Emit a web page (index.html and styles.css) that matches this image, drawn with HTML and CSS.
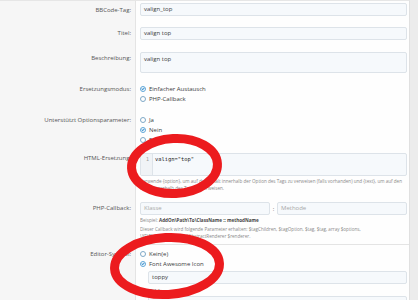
FILE: index.html
```html
<!DOCTYPE html>
<html lang="de">

<head>
    <meta charset="UTF-8">
    <meta name="viewport" content="width=device-width, initial-scale=1.0">
    <title>BB-Code bearbeiten</title>
    <link rel="stylesheet" href="styles.css">
</head>

<body>
    <div class="page">
        <div class="block">
            <!-- BBCode-Tag -->
            <div class="row row-first">
                <div class="label">BBCode-Tag:</div>
                <div class="field">
                    <div class="input">valign_top</div>
                </div>
            </div>

            <div class="row">
                <div class="label">Titel:</div>
                <div class="field">
                    <div class="input">valign top</div>
                </div>
            </div>

            <div class="row row-desc">
                <div class="label">Beschreibung:</div>
                <div class="field">
                    <div class="input textarea">valign top</div>
                </div>
            </div>

            <div class="row row-mode">
                <div class="label">Ersetzungsmodus:</div>
                <div class="field">
                    <div class="choice checked"><span class="radio"></span>Einfacher Austausch</div>
                    <div class="choice"><span class="radio"></span>PHP-Callback</div>
                </div>
            </div>

            <div class="row row-opts">
                <div class="label">Unterstützt Optionsparameter:</div>
                <div class="field">
                    <div class="choice"><span class="radio"></span>Ja</div>
                    <div class="choice checked"><span class="radio"></span>Nein</div>
                    <div class="choice"><span class="radio"></span>Erforderlich</div>
                </div>
            </div>

            <div class="row row-html">
                <div class="label">HTML-Ersetzung:</div>
                <div class="field">
                    <div class="editor">
                        <div class="gutter">1</div>
                        <div class="code">valign="top"</div>
                    </div>
                    <p class="hint">Verwende {option}, um auf den Inhalt innerhalb der Option des Tags zu verweisen (falls vorhanden) und {text}, um auf den</p>
                    <p class="hint hint-next">Inhalt innerhalb des Tags zu verweisen.</p>
                </div>
            </div>

            <div class="row row-callback">
                <div class="label">PHP-Callback:</div>
                <div class="field">
                    <div class="callback">
                        <div class="input placeholder">Klasse</div>
                        <span class="sep">:</span>
                        <div class="input placeholder">Methode</div>
                    </div>
                    <p class="hint">Beispiel: <b>AddOn\Path\To\ClassName :: methodName</b></p>
                    <p class="hint hint-params">Dieser Callback wird folgende Parameter erhalten: $tagChildren, $tagOption, $tag, $tag, array $options,</p>
                    <p class="hint hint-next">\XF\BbCode\Renderer\AbstractRenderer $renderer.</p>
                </div>
            </div>

            <div class="row row-icon">
                <div class="label">Editor-Symbol:</div>
                <div class="field">
                    <div class="choice"><span class="radio"></span>Kein(e)</div>
                    <div class="choice checked"><span class="radio"></span>Font Awesome Icon</div>
                    <div class="input sub">toppy</div>
                    <div class="choice"><span class="radio"></span>Bild</div>
                    <div class="input sub sub-last"></div>
                </div>
            </div>
        </div>
        <div class="rail"></div>
    </div>

    <!-- Markierungen -->
    <svg class="marks" width="418" height="300" viewBox="0 0 418 300">
        <ellipse cx="174.5" cy="166" rx="43" ry="27.5" fill="none" stroke="#ec1b1e" stroke-width="9" transform="rotate(-3 174.5 166)"/>
        <ellipse cx="167" cy="266" rx="52.5" ry="28.5" fill="none" stroke="#ec1b1e" stroke-width="9" transform="rotate(-3 167 266)"/>
    </svg>
</body>

</html>
```

FILE: styles.css
```css
body,
html {
    margin: 0;
    padding: 0;
    height: 100%;
    overflow: hidden;
    font-family: 'Open Sans', 'Noto Sans', sans-serif;
    background-color: #ececec;
}

.page {
    display: flex;
    height: 300px;
}

.block {
    width: 409px;
    background-color: #fefefe;
    border-top: 1px solid #e6e6e6;
    border-right: 1px solid #e0e0e0;
    overflow: hidden;
}

.rail {
    flex: 1;
    background-color: #ececec;
}

.row {
    display: flex;
}

.label {
    width: 131px;
    flex-shrink: 0;
    padding-right: 4px;
    background-color: #f6f6f6;
    border-right: 1px solid #e4e4e4;
    text-align: right;
    font-size: 6px;
    color: #555;
    line-height: 10px;
}

.field {
    flex: 1;
    min-width: 0;
    padding: 0 2px 0 4px;
    font-size: 6px;
    color: #333;
}

/* Zeilenabstände */
.row .label { padding-top: 6px; }
.row .field { padding-top: 5px; padding-bottom: 6px; }

.row-first .label { padding-top: 4px; }
.row-first .field { padding-top: 2px; }

.row-desc .label { padding-top: 7px; }
.row-desc .field { padding-top: 6px; padding-bottom: 5px; }

.row-mode .label { padding-top: 6px; }
.row-mode .field { padding-top: 6px; padding-bottom: 5px; }

.row-opts .label { padding-top: 6px; }
.row-opts .field { padding-top: 6px; padding-bottom: 4px; }

.row-html .label { padding-top: 4px; }
.row-html .field { padding-top: 4px; padding-bottom: 5px; }

.row-callback .label { padding-top: 6px; }
.row-callback .field {
    padding-top: 5px;
    padding-bottom: 4px;
    border-bottom: 1px solid #e4e4e4;
}

.row-icon .label { padding-top: 4px; }
.row-icon .field { padding-top: 4px; padding-bottom: 0; }

.input {
    height: 11px;
    line-height: 11px;
    padding: 0 3px;
    background-color: #f6f9fc;
    border: 1px solid #dde3e9;
    border-radius: 2px;
    color: #3c3c3c;
    font-size: 6px;
    white-space: nowrap;
    overflow: hidden;
}

.textarea {
    height: 19px;
    line-height: 13px;
}

.placeholder {
    color: #a8a8a8;
}

.choice {
    display: flex;
    align-items: center;
    height: 10px;
    font-size: 6px;
    color: #3c3c3c;
    white-space: nowrap;
}

.radio {
    width: 4px;
    height: 4px;
    margin-right: 3px;
    border: 1px solid #7fa9c7;
    border-radius: 50%;
    background-color: #fff;
    position: relative;
}

.checked .radio {
    border-color: #5ea6d8;
}

.checked .radio::after {
    content: '';
    position: absolute;
    left: 1px;
    top: 0;
    width: 1px;
    height: 2px;
    border-right: 1px solid #4a9ad4;
    border-bottom: 1px solid #4a9ad4;
    transform: rotate(45deg);
}

.editor {
    display: flex;
    height: 21px;
    background-color: #f6f9fc;
    border: 1px solid #dde3e9;
    border-radius: 2px;
}

.gutter {
    width: 8px;
    padding-right: 3px;
    text-align: right;
    background-color: #f0f3f6;
    border-right: 1px solid #dde3e9;
    font-family: 'DejaVu Sans Mono', monospace;
    font-size: 5px;
    line-height: 10px;
    color: #999;
}

.code {
    padding-left: 2px;
    font-family: 'DejaVu Sans Mono', monospace;
    font-size: 5.4px;
    line-height: 10px;
    color: #222;
}

.hint {
    margin: 2px 0 0;
    height: 7px;
    font-size: 4.6px;
    line-height: 7px;
    color: #8a8a8a;
    white-space: nowrap;
    overflow: hidden;
}

.hint b {
    color: #444;
}

.hint-params {
    margin-top: 2px;
}

.hint-next {
    margin-top: 0;
}

.callback {
    display: flex;
    align-items: center;
}

.callback .input {
    flex: 1;
}

.sep {
    width: 7px;
    text-align: center;
    color: #666;
}

.sub {
    margin: 2px 0 2px 8px;
}

.sub-last {
    margin-top: 0;
}

.marks {
    position: absolute;
    top: 0;
    left: 0;
    pointer-events: none;
}
```
